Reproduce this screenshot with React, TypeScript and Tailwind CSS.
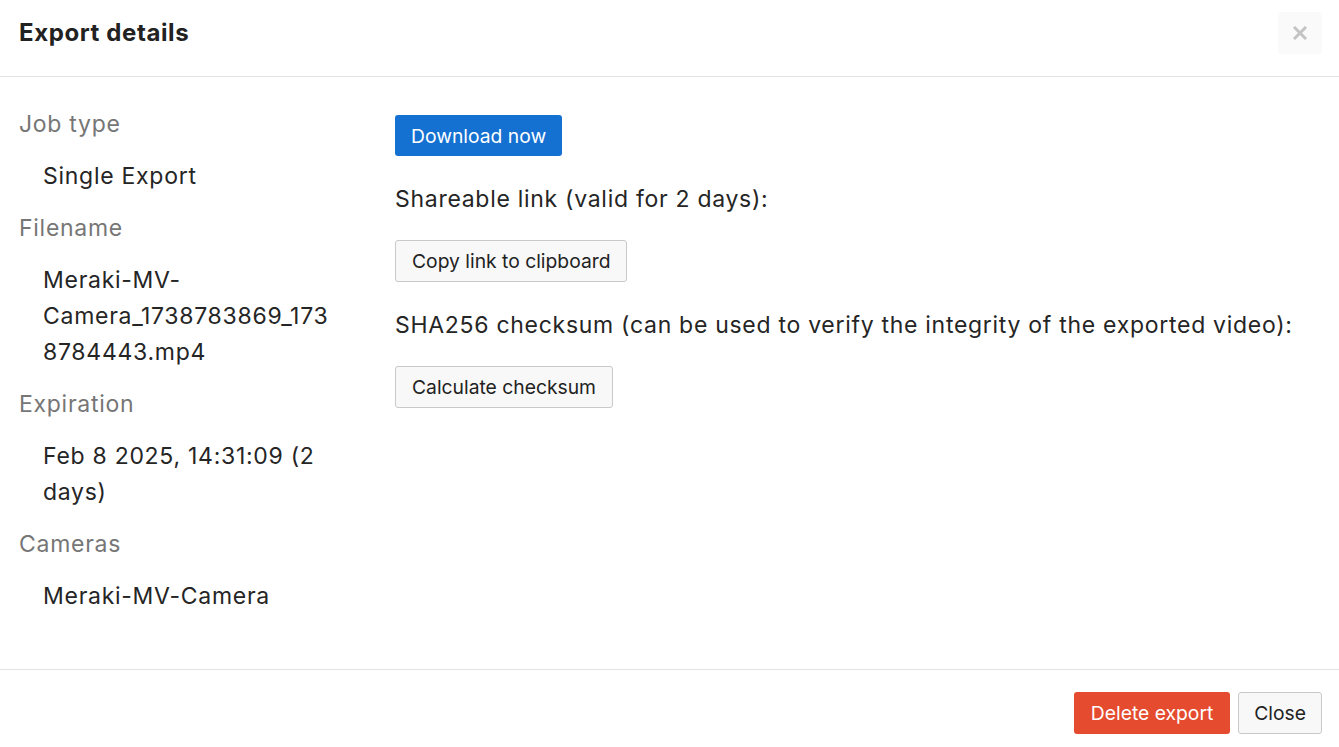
import React from 'react';

interface DetailItem {
  label: string;
  value: string;
}

const details: DetailItem[] = [
  { label: 'Job type', value: 'Single Export' },
  { label: 'Filename', value: 'Meraki-MV-Camera_1738783869_1738784443.mp4' },
  { label: 'Expiration', value: 'Feb 8 2025, 14:31:09 (2 days)' },
  { label: 'Cameras', value: 'Meraki-MV-Camera' },
];

const ExportDetails: React.FC = () => {
  return (
    <div
      className="flex h-[747px] w-full flex-col bg-white text-[#252525]"
      style={{ fontFamily: 'Inter, "Noto Sans", sans-serif' }}
    >
      {/* Header */}
      <div className="flex h-[77px] shrink-0 items-start justify-between border-b border-[#e3e3e3] pl-[19px] pr-[17px]">
        <h2 className="mt-[17px] text-[24px] font-bold leading-[32px] tracking-[0.6px] text-[#222]">
          Export details
        </h2>
        <button className="mt-[12px] flex h-[42px] w-[44px] items-center justify-center rounded-[3px] bg-[#fafafa]">
          <svg width="14" height="14" viewBox="0 0 14 14">
            <path d="M2 2 L12 12 M12 2 L2 12" stroke="#c4c4c4" strokeWidth="3" strokeLinecap="square" />
          </svg>
        </button>
      </div>

      {/* Body */}
      <div className="flex flex-1 pl-[19px]">
        <dl className="w-[343px] shrink-0 pt-[29px] text-[23px] leading-[36px] tracking-[0.72px]">
          {details.map((d) => (
            <div key={d.label}>
              <dt className="mb-[16px] text-[#767676]">{d.label}</dt>
              <dd className="mb-[16px] px-6 [overflow-wrap:anywhere]">{d.value}</dd>
            </div>
          ))}
        </dl>

        <div className="ml-[33px] flex flex-col items-start pt-[38px] text-[23px] leading-[36px] tracking-[0.71px]">
          <button className="h-[41px] rounded-[3px] bg-[#1471d2] px-[16px] text-[19.3px] tracking-normal text-white">
            Download now
          </button>
          <p className="mt-[25px]">Shareable link (valid for 2 days):</p>
          <button className="mt-[23px] h-[42px] rounded-[3px] border border-[#c9c9c9] bg-[#f8f8f8] px-[16px] text-[19.3px] tracking-normal text-[#222]">
            Copy link to clipboard
          </button>
          <p className="mt-[25px]">
            SHA256 checksum (can be used to verify the integrity of the exported video):
          </p>
          <button className="mt-[23px] h-[42px] rounded-[3px] border border-[#c9c9c9] bg-[#f8f8f8] px-[16px] text-[19.3px] tracking-normal text-[#222]">
            Calculate checksum
          </button>
        </div>
      </div>

      {/* Footer */}
      <div className="flex h-[78px] shrink-0 items-start justify-end gap-2 border-t border-[#e3e3e3] pr-[17px] pt-[22px]">
        <button className="h-[42px] rounded-[3px] bg-[#e54c2f] px-[17px] text-[19.3px] text-white">
          Delete export
        </button>
        <button className="h-[42px] rounded-[3px] border border-[#c9c9c9] bg-[#f8f8f8] px-[15px] text-[19.3px] text-[#222]">
          Close
        </button>
      </div>
    </div>
  );
};

export default function App() {
  return <ExportDetails />;
}
